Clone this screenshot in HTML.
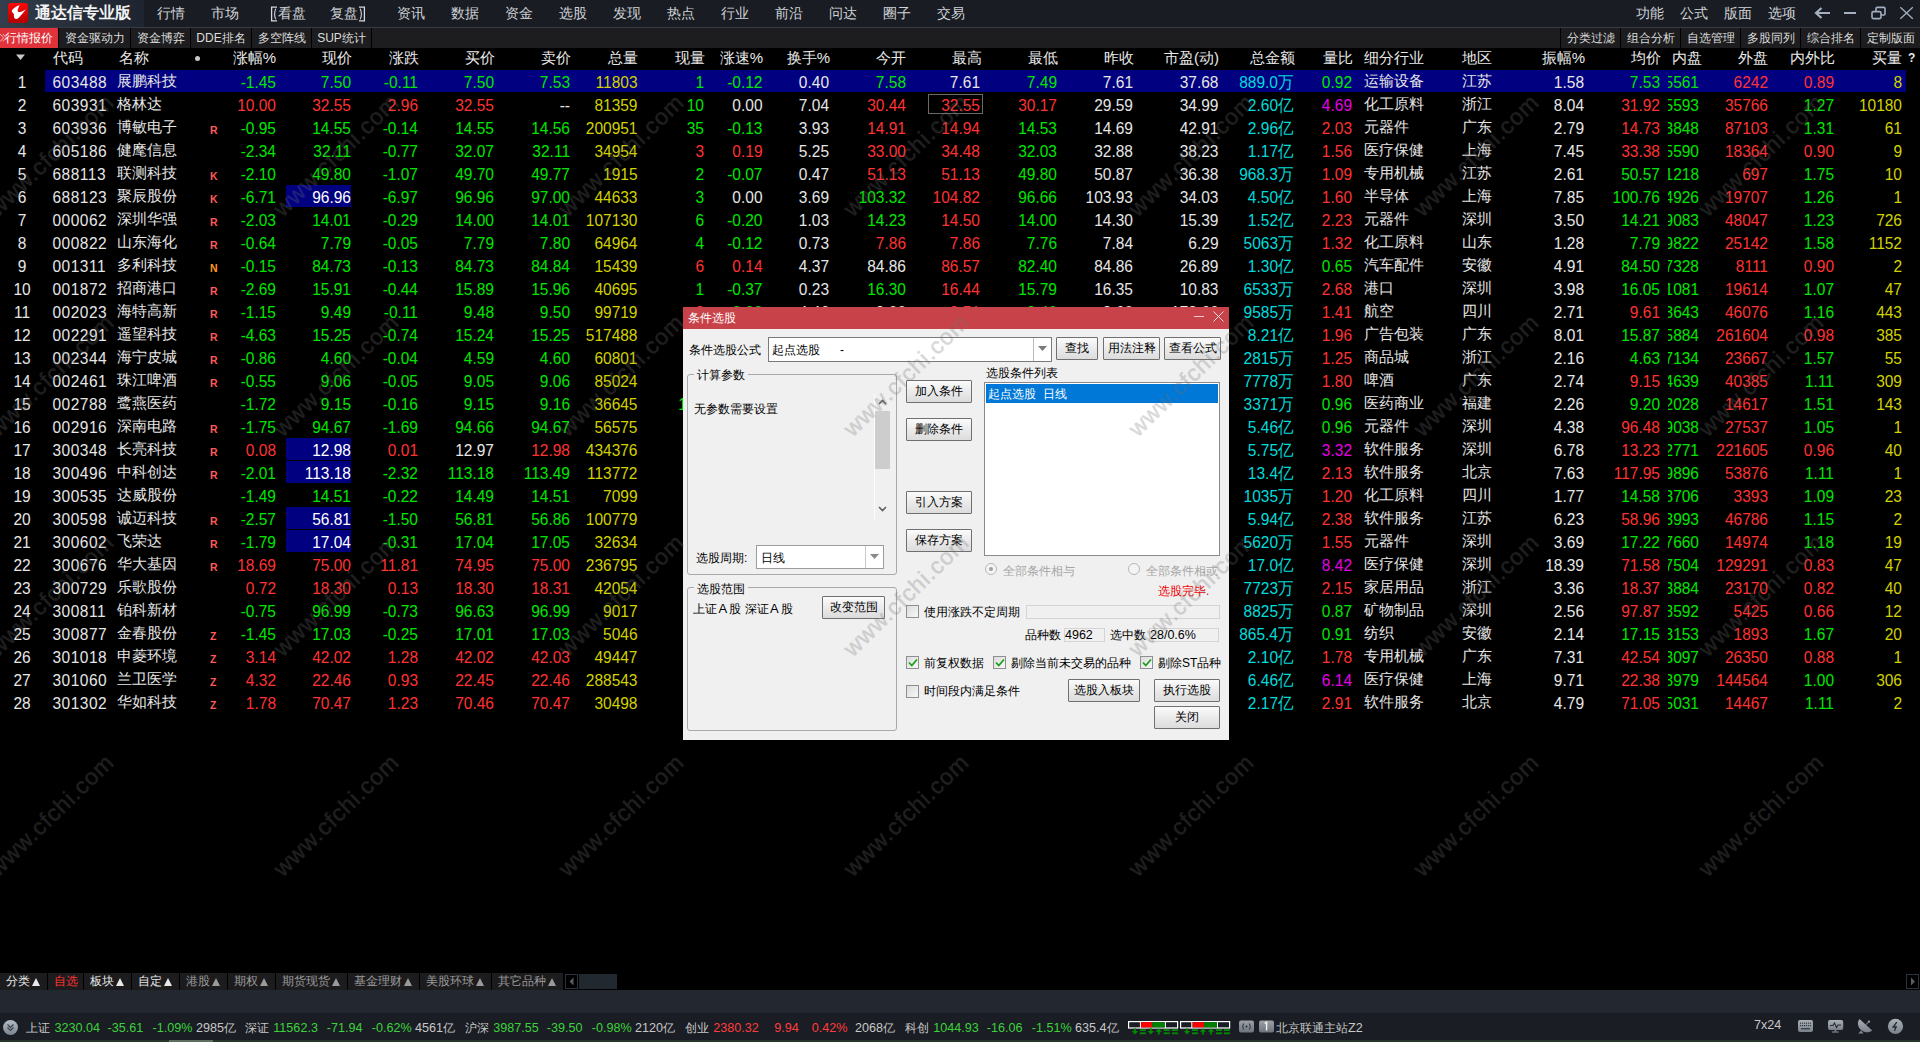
<!DOCTYPE html>
<html><head><meta charset="utf-8">
<style>
*{margin:0;padding:0;box-sizing:border-box}
html,body{width:1920px;height:1042px;overflow:hidden;background:#000;font-family:"Liberation Sans",sans-serif;position:relative}
div{position:absolute;white-space:nowrap}
#title{left:0;top:0;width:1920px;height:27px;background:#191c23}
#logoarea{left:0;top:0;width:144px;height:27px;background:linear-gradient(90deg,#343e4c,#222934 70%,#1f2530)}
#tline{left:0;top:27px;width:1920px;height:1px;background:#363b44}
#logo{left:8px;top:3px;width:20px;height:20px;border-radius:3px;background:linear-gradient(180deg,#ff0808,#b20000)}
#apptitle{left:35px;top:3px;font-size:16px;font-weight:bold;color:#f2f2f2;line-height:20px}
.mn{top:4px;font-size:14px;line-height:18px;color:#cfd2d6}
#tabbar{left:0;top:28px;width:1920px;height:20px;background:#1d1d1f}
.tb{top:28px;height:20px;font-size:12px;line-height:20px;color:#dcdcdc;text-align:center;background:#1d1d1f}
.tsep{top:28px;width:1px;height:20px;background:#000}
#redtab{left:0;top:28px;width:58px;height:20px;background:#e0323a;color:#fff;font-size:12px;line-height:20px}
.h{top:48px;height:22px;line-height:20px;font-size:15px;color:#e8e8e8}
.hlrow{left:45px;width:1861px;height:22px;background:#000080}
.hlcell{left:286px;width:65px;height:22px;background:#000080}
.c{height:22px;line-height:22px;font-size:15.5px}
.n,.code,.idx,.np span{transform:translateY(2px) scaleY(1.1);transform-origin:50% 56%}
.idx{left:0;width:44px;text-align:center;color:#e6e6e6;font-size:15.5px}
.code{left:52.5px;color:#e6e6e6;letter-spacing:0.5px}
.nm{left:117px;color:#e6e6e6;font-size:15px}
.let{left:210px;font-size:10.5px;font-weight:bold;top:0;padding-top:3px}
.ind{left:1364px;color:#e6e6e6;font-size:15px}
.reg{left:1462px;color:#e6e6e6;font-size:15px}
.np{left:1668px;width:31px;overflow:hidden;color:#00e600}
.np span{position:absolute;right:0;top:0}
.wm{width:200px;height:24px;line-height:24px;text-align:center;font-size:23px;letter-spacing:0.9px;color:#727272;-webkit-text-stroke:0.45px #727272;opacity:0.27;transform:rotate(-44deg);z-index:50;pointer-events:none}
#btabbar{left:0;top:973px;width:617px;height:17px;background:#000}
.bt{top:973px;height:17px;line-height:17px;font-size:12px;background:#1c1c1e;padding-left:5.5px}
.tri{display:inline-block;width:0;height:0;border-left:4.5px solid transparent;border-right:4.5px solid transparent;border-bottom:8px solid currentColor;margin-left:2px;vertical-align:-1px}
#bar2{left:0;top:990px;width:1920px;height:23px;background:#222730}
#status{left:0;top:1013px;width:1920px;height:29px;background:#1a1d23}
.st{top:1019px;font-size:12.6px;line-height:18px}
/* dialog */
#dlg{left:683px;top:307px;width:546px;height:433px;background:#f0f0f0;z-index:10;font-size:12px;color:#000}
#dlg div{line-height:14px}
#dtitle{left:0;top:0;width:546px;height:22px;background:#c84349}
.btn{height:23px;border:1px solid #707070;border-radius:1px;background:linear-gradient(180deg,#fbfbfb 0%,#ececec 45%,#dcdcdc 100%);text-align:center;line-height:20px!important;font-size:12px}
.btn span{position:static}
.grp{border:1px solid #a9a9a9;border-radius:3px}
.glab{background:#f0f0f0;padding:0 3px}
.edit{background:#fff;border:1px solid #7a7a7a}
.chk{width:13px;height:13px;border:1px solid #8e8f8f;background:linear-gradient(135deg,#dcdcdc,#f8f8f8)}
</style></head><body>
<div id="title"></div>
<div id="logoarea"></div>
<div id="tline"></div>
<div id="logo"><svg width="20" height="20" viewBox="0 0 20 20" style="position:absolute;left:0;top:0"><path d="M11.7 2 C9.5 2.8 7 4 5 6 C4 7 3.6 8 4 8.8 C4.6 9.8 5.6 10.6 6 11.4 C5.9 12.6 5.8 14 6.4 15 C6.8 15.8 7.6 16 8.6 15.9 C9.4 15.8 10.2 15.4 11 14.6 C13.4 12 15.8 9 18 6.3 C16.4 7.4 14.4 8.4 12.2 9 C11 9.2 9.8 9 9.6 8 C9.6 6.6 10.8 4 11.7 2 Z" fill="#fff"/></svg></div>
<div id="apptitle">通达信专业版</div>
<div class="mn" style="left:157px">行情</div>
<div class="mn" style="left:211px">市场</div>
<div class="mn" style="left:278px">看盘</div>
<div class="mn" style="left:330px">复盘</div>
<div class="mn" style="left:397px">资讯</div>
<div class="mn" style="left:451px">数据</div>
<div class="mn" style="left:505px">资金</div>
<div class="mn" style="left:559px">选股</div>
<div class="mn" style="left:613px">发现</div>
<div class="mn" style="left:667px">热点</div>
<div class="mn" style="left:721px">行业</div>
<div class="mn" style="left:775px">前沿</div>
<div class="mn" style="left:829px">问达</div>
<div class="mn" style="left:883px">圈子</div>
<div class="mn" style="left:937px">交易</div>
<svg style="position:absolute;left:270px;top:6px" width="8" height="16" viewBox="0 0 8 16"><path d="M7 1.2 H1.6 V14.8 H7" stroke="#d6d8dc" stroke-width="1.3" fill="none"/><path d="M5.8 2.6 Q3.4 8 5.8 13.4" stroke="#d6d8dc" stroke-width="1.1" fill="none"/></svg>
<svg style="position:absolute;left:358px;top:6px" width="8" height="16" viewBox="0 0 8 16"><path d="M1 1.2 H6.4 V14.8 H1" stroke="#d6d8dc" stroke-width="1.3" fill="none"/><path d="M2.2 2.6 Q4.6 8 2.2 13.4" stroke="#d6d8dc" stroke-width="1.1" fill="none"/></svg>
<div class="mn" style="left:1636px">功能</div>
<div class="mn" style="left:1680px">公式</div>
<div class="mn" style="left:1724px">版面</div>
<div class="mn" style="left:1767.5px">选项</div>
<svg style="position:absolute;left:1812px;top:6px" width="110" height="16" viewBox="0 0 110 16">
<path d="M4 7 H18" stroke="#a4b0c2" stroke-width="2" fill="none"/>
<path d="M9.5 2 L4 7 L9.5 12" stroke="#a4b0c2" stroke-width="2.2" fill="none"/>
<path d="M32 7 H44" stroke="#a4b0c2" stroke-width="2" fill="none"/>
<path d="M64 5 V2.6 Q64 1.4 65.2 1.4 H71.8 Q73 1.4 73 2.6 V7.8 Q73 9 71.8 9 H69" stroke="#a4b0c2" stroke-width="1.6" fill="none"/>
<rect x="60" y="5.6" width="9" height="7" rx="1.3" stroke="#a4b0c2" stroke-width="1.6" fill="none"/>
<path d="M88.3 1.2 L100.8 12.8 M100.8 1.2 L88.3 12.8" stroke="#a4b0c2" stroke-width="1.3" fill="none"/>
</svg>
<div id="tabbar"></div>
<div id="redtab"><svg style="position:absolute;left:0;top:5px" width="8" height="10"><path d="M0 1 L3.6 4.8 L0 8.6 M2.8 1 L6.4 4.8 L2.8 8.6" stroke="#f4b8b8" stroke-width="1" fill="none"/></svg><span style="position:absolute;left:5px;top:0">行情报价</span></div>
<div class="tb" style="left:59px;width:71px">资金驱动力</div>
<div class="tb" style="left:131px;width:59px">资金博弈</div>
<div class="tb" style="left:191px;width:60px">DDE排名</div>
<div class="tb" style="left:252px;width:59px">多空阵线</div>
<div class="tb" style="left:312px;width:59px">SUP统计</div>
<div class="tb" style="left:1561px;width:59px">分类过滤</div>
<div class="tb" style="left:1621px;width:59px">组合分析</div>
<div class="tb" style="left:1681px;width:59px">自选管理</div>
<div class="tb" style="left:1741px;width:59px">多股同列</div>
<div class="tb" style="left:1801px;width:59px">综合排名</div>
<div class="tb" style="left:1861px;width:59px">定制版面</div>
<div class="tsep" style="left:58px"></div><div class="tsep" style="left:130px"></div><div class="tsep" style="left:190px"></div><div class="tsep" style="left:251px"></div><div class="tsep" style="left:311px"></div><div class="tsep" style="left:371px"></div>
<div class="tsep" style="left:1560px"></div><div class="tsep" style="left:1620px"></div><div class="tsep" style="left:1680px"></div><div class="tsep" style="left:1740px"></div><div class="tsep" style="left:1800px"></div><div class="tsep" style="left:1860px"></div>
<svg style="position:absolute;left:15px;top:54px" width="11" height="7"><path d="M1 0.5 H10 L5.5 6 Z" fill="#c8c8c8"/></svg>
<div style="left:195px;top:56px;width:5px;height:5px;border-radius:50%;background:#c8c8c8"></div>
<div class="h" style="left:52.5px">代码</div>
<div class="h" style="left:119px">名称</div>
<div class="h" style="right:1644px">涨幅%</div>
<div class="h" style="right:1568px">现价</div>
<div class="h" style="right:1501px">涨跌</div>
<div class="h" style="right:1425px">买价</div>
<div class="h" style="right:1349px">卖价</div>
<div class="h" style="right:1282px">总量</div>
<div class="h" style="right:1215px">现量</div>
<div class="h" style="right:1157px">涨速%</div>
<div class="h" style="right:1090px">换手%</div>
<div class="h" style="right:1014px">今开</div>
<div class="h" style="right:938px">最高</div>
<div class="h" style="right:862px">最低</div>
<div class="h" style="right:786px">昨收</div>
<div class="h" style="right:701px">市盈(动)</div>
<div class="h" style="right:625px">总金额</div>
<div class="h" style="right:567px">量比</div>
<div class="h" style="left:1364px">细分行业</div>
<div class="h" style="left:1462px">地区</div>
<div class="h" style="right:335px">振幅%</div>
<div class="h" style="right:259px">均价</div>
<div class="h" style="left:1671.5px">内盘</div>
<div class="h" style="right:152px">外盘</div>
<div class="h" style="right:85px">内外比</div>
<div class="h" style="right:18px">买量</div>
<div class="h" style="left:1908px;font-size:12px;font-weight:bold">?</div>
<div class="hlrow" style="top:70px"></div>
<div class="c idx" style="top:70px">1</div>
<div class="c code" style="top:70px">603488</div>
<div class="c nm" style="top:70px">展鹏科技</div>
<div class="c n" style="top:70px;right:1644px;color:#00e600">-1.45</div>
<div class="c n" style="top:70px;right:1569px;color:#00e600">7.50</div>
<div class="c n" style="top:70px;right:1502px;color:#00e600">-0.11</div>
<div class="c n" style="top:70px;right:1426px;color:#00e600">7.50</div>
<div class="c n" style="top:70px;right:1350px;color:#00e600">7.53</div>
<div class="c n" style="top:70px;right:1282.5px;color:#d2d200">11803</div>
<div class="c n" style="top:70px;right:1216px;color:#00e600">1</div>
<div class="c n" style="top:70px;right:1157.5px;color:#00e600">-0.12</div>
<div class="c n" style="top:70px;right:1091px;color:#e6e6e6">0.40</div>
<div class="c n" style="top:70px;right:1014px;color:#00e600">7.58</div>
<div class="c n" style="top:70px;right:940px;color:#e6e6e6">7.61</div>
<div class="c n" style="top:70px;right:863px;color:#00e600">7.49</div>
<div class="c n" style="top:70px;right:787px;color:#e6e6e6">7.61</div>
<div class="c n" style="top:70px;right:701.5px;color:#e6e6e6">37.68</div>
<div class="c n" style="top:70px;right:626px;color:#00dcdc">889.0万</div>
<div class="c n" style="top:70px;right:568px;color:#00e600">0.92</div>
<div class="c ind" style="top:70px">运输设备</div>
<div class="c reg" style="top:70px">江苏</div>
<div class="c n" style="top:70px;right:336px;color:#e6e6e6">1.58</div>
<div class="c n" style="top:70px;right:260px;color:#00e600">7.53</div>
<div class="c np" style="top:70px;color:#00e600"><span>55561</span></div>
<div class="c n" style="top:70px;right:152px;color:#ff3232">6242</div>
<div class="c n" style="top:70px;right:86px;color:#ff3232">0.89</div>
<div class="c n" style="top:70px;right:18px;color:#d2d200">8</div>
<div class="c idx" style="top:93px">2</div>
<div class="c code" style="top:93px">603931</div>
<div class="c nm" style="top:93px">格林达</div>
<div class="c n" style="top:93px;right:1644px;color:#ff3232">10.00</div>
<div class="c n" style="top:93px;right:1569px;color:#ff3232">32.55</div>
<div class="c n" style="top:93px;right:1502px;color:#ff3232">2.96</div>
<div class="c n" style="top:93px;right:1426px;color:#ff3232">32.55</div>
<div class="c n" style="top:93px;right:1350px;color:#e6e6e6">--</div>
<div class="c n" style="top:93px;right:1282.5px;color:#d2d200">81359</div>
<div class="c n" style="top:93px;right:1216px;color:#00e600">10</div>
<div class="c n" style="top:93px;right:1157.5px;color:#e6e6e6">0.00</div>
<div class="c n" style="top:93px;right:1091px;color:#e6e6e6">7.04</div>
<div class="c n" style="top:93px;right:1014px;color:#ff3232">30.44</div>
<div class="c n" style="top:93px;right:940px;color:#ff3232">32.55</div>
<div class="c n" style="top:93px;right:863px;color:#ff3232">30.17</div>
<div class="c n" style="top:93px;right:787px;color:#e6e6e6">29.59</div>
<div class="c n" style="top:93px;right:701.5px;color:#e6e6e6">34.99</div>
<div class="c n" style="top:93px;right:626px;color:#00dcdc">2.60亿</div>
<div class="c n" style="top:93px;right:568px;color:#e600e6">4.69</div>
<div class="c ind" style="top:93px">化工原料</div>
<div class="c reg" style="top:93px">浙江</div>
<div class="c n" style="top:93px;right:336px;color:#e6e6e6">8.04</div>
<div class="c n" style="top:93px;right:260px;color:#ff3232">31.92</div>
<div class="c np" style="top:93px;color:#00e600"><span>55593</span></div>
<div class="c n" style="top:93px;right:152px;color:#ff3232">35766</div>
<div class="c n" style="top:93px;right:86px;color:#00e600">1.27</div>
<div class="c n" style="top:93px;right:18px;color:#d2d200">10180</div>
<div class="c idx" style="top:116px">3</div>
<div class="c code" style="top:116px">603936</div>
<div class="c nm" style="top:116px">博敏电子</div>
<div class="c let" style="top:116px;color:#ff5a5a">R</div>
<div class="c n" style="top:116px;right:1644px;color:#00e600">-0.95</div>
<div class="c n" style="top:116px;right:1569px;color:#00e600">14.55</div>
<div class="c n" style="top:116px;right:1502px;color:#00e600">-0.14</div>
<div class="c n" style="top:116px;right:1426px;color:#00e600">14.55</div>
<div class="c n" style="top:116px;right:1350px;color:#00e600">14.56</div>
<div class="c n" style="top:116px;right:1282.5px;color:#d2d200">200951</div>
<div class="c n" style="top:116px;right:1216px;color:#00e600">35</div>
<div class="c n" style="top:116px;right:1157.5px;color:#00e600">-0.13</div>
<div class="c n" style="top:116px;right:1091px;color:#e6e6e6">3.93</div>
<div class="c n" style="top:116px;right:1014px;color:#ff3232">14.91</div>
<div class="c n" style="top:116px;right:940px;color:#ff3232">14.94</div>
<div class="c n" style="top:116px;right:863px;color:#00e600">14.53</div>
<div class="c n" style="top:116px;right:787px;color:#e6e6e6">14.69</div>
<div class="c n" style="top:116px;right:701.5px;color:#e6e6e6">42.91</div>
<div class="c n" style="top:116px;right:626px;color:#00dcdc">2.96亿</div>
<div class="c n" style="top:116px;right:568px;color:#ff3232">2.03</div>
<div class="c ind" style="top:116px">元器件</div>
<div class="c reg" style="top:116px">广东</div>
<div class="c n" style="top:116px;right:336px;color:#e6e6e6">2.79</div>
<div class="c n" style="top:116px;right:260px;color:#ff3232">14.73</div>
<div class="c np" style="top:116px;color:#00e600"><span>33848</span></div>
<div class="c n" style="top:116px;right:152px;color:#ff3232">87103</div>
<div class="c n" style="top:116px;right:86px;color:#00e600">1.31</div>
<div class="c n" style="top:116px;right:18px;color:#d2d200">61</div>
<div class="c idx" style="top:139px">4</div>
<div class="c code" style="top:139px">605186</div>
<div class="c nm" style="top:139px">健麾信息</div>
<div class="c n" style="top:139px;right:1644px;color:#00e600">-2.34</div>
<div class="c n" style="top:139px;right:1569px;color:#00e600">32.11</div>
<div class="c n" style="top:139px;right:1502px;color:#00e600">-0.77</div>
<div class="c n" style="top:139px;right:1426px;color:#00e600">32.07</div>
<div class="c n" style="top:139px;right:1350px;color:#00e600">32.11</div>
<div class="c n" style="top:139px;right:1282.5px;color:#d2d200">34954</div>
<div class="c n" style="top:139px;right:1216px;color:#ff3232">3</div>
<div class="c n" style="top:139px;right:1157.5px;color:#ff3232">0.19</div>
<div class="c n" style="top:139px;right:1091px;color:#e6e6e6">5.25</div>
<div class="c n" style="top:139px;right:1014px;color:#ff3232">33.00</div>
<div class="c n" style="top:139px;right:940px;color:#ff3232">34.48</div>
<div class="c n" style="top:139px;right:863px;color:#00e600">32.03</div>
<div class="c n" style="top:139px;right:787px;color:#e6e6e6">32.88</div>
<div class="c n" style="top:139px;right:701.5px;color:#e6e6e6">38.23</div>
<div class="c n" style="top:139px;right:626px;color:#00dcdc">1.17亿</div>
<div class="c n" style="top:139px;right:568px;color:#ff3232">1.56</div>
<div class="c ind" style="top:139px">医疗保健</div>
<div class="c reg" style="top:139px">上海</div>
<div class="c n" style="top:139px;right:336px;color:#e6e6e6">7.45</div>
<div class="c n" style="top:139px;right:260px;color:#ff3232">33.38</div>
<div class="c np" style="top:139px;color:#00e600"><span>55590</span></div>
<div class="c n" style="top:139px;right:152px;color:#ff3232">18364</div>
<div class="c n" style="top:139px;right:86px;color:#ff3232">0.90</div>
<div class="c n" style="top:139px;right:18px;color:#d2d200">9</div>
<div class="c idx" style="top:162px">5</div>
<div class="c code" style="top:162px">688113</div>
<div class="c nm" style="top:162px">联测科技</div>
<div class="c let" style="top:162px;color:#ff5a5a">K</div>
<div class="c n" style="top:162px;right:1644px;color:#00e600">-2.10</div>
<div class="c n" style="top:162px;right:1569px;color:#00e600">49.80</div>
<div class="c n" style="top:162px;right:1502px;color:#00e600">-1.07</div>
<div class="c n" style="top:162px;right:1426px;color:#00e600">49.70</div>
<div class="c n" style="top:162px;right:1350px;color:#00e600">49.77</div>
<div class="c n" style="top:162px;right:1282.5px;color:#d2d200">1915</div>
<div class="c n" style="top:162px;right:1216px;color:#00e600">2</div>
<div class="c n" style="top:162px;right:1157.5px;color:#00e600">-0.07</div>
<div class="c n" style="top:162px;right:1091px;color:#e6e6e6">0.47</div>
<div class="c n" style="top:162px;right:1014px;color:#ff3232">51.13</div>
<div class="c n" style="top:162px;right:940px;color:#ff3232">51.13</div>
<div class="c n" style="top:162px;right:863px;color:#00e600">49.80</div>
<div class="c n" style="top:162px;right:787px;color:#e6e6e6">50.87</div>
<div class="c n" style="top:162px;right:701.5px;color:#e6e6e6">36.38</div>
<div class="c n" style="top:162px;right:626px;color:#00dcdc">968.3万</div>
<div class="c n" style="top:162px;right:568px;color:#ff3232">1.09</div>
<div class="c ind" style="top:162px">专用机械</div>
<div class="c reg" style="top:162px">江苏</div>
<div class="c n" style="top:162px;right:336px;color:#e6e6e6">2.61</div>
<div class="c n" style="top:162px;right:260px;color:#00e600">50.57</div>
<div class="c np" style="top:162px;color:#00e600"><span>11218</span></div>
<div class="c n" style="top:162px;right:152px;color:#ff3232">697</div>
<div class="c n" style="top:162px;right:86px;color:#00e600">1.75</div>
<div class="c n" style="top:162px;right:18px;color:#d2d200">10</div>
<div class="c idx" style="top:185px">6</div>
<div class="c code" style="top:185px">688123</div>
<div class="c nm" style="top:185px">聚辰股份</div>
<div class="c let" style="top:185px;color:#ff5a5a">K</div>
<div class="c n" style="top:185px;right:1644px;color:#00e600">-6.71</div>
<div class="hlcell" style="top:185px"></div>
<div class="c n" style="top:185px;right:1569px;color:#ffffff">96.96</div>
<div class="c n" style="top:185px;right:1502px;color:#00e600">-6.97</div>
<div class="c n" style="top:185px;right:1426px;color:#00e600">96.96</div>
<div class="c n" style="top:185px;right:1350px;color:#00e600">97.00</div>
<div class="c n" style="top:185px;right:1282.5px;color:#d2d200">44633</div>
<div class="c n" style="top:185px;right:1216px;color:#00e600">3</div>
<div class="c n" style="top:185px;right:1157.5px;color:#e6e6e6">0.00</div>
<div class="c n" style="top:185px;right:1091px;color:#e6e6e6">3.69</div>
<div class="c n" style="top:185px;right:1014px;color:#00e600">103.32</div>
<div class="c n" style="top:185px;right:940px;color:#ff3232">104.82</div>
<div class="c n" style="top:185px;right:863px;color:#00e600">96.66</div>
<div class="c n" style="top:185px;right:787px;color:#e6e6e6">103.93</div>
<div class="c n" style="top:185px;right:701.5px;color:#e6e6e6">34.03</div>
<div class="c n" style="top:185px;right:626px;color:#00dcdc">4.50亿</div>
<div class="c n" style="top:185px;right:568px;color:#ff3232">1.60</div>
<div class="c ind" style="top:185px">半导体</div>
<div class="c reg" style="top:185px">上海</div>
<div class="c n" style="top:185px;right:336px;color:#e6e6e6">7.85</div>
<div class="c n" style="top:185px;right:260px;color:#00e600">100.76</div>
<div class="c np" style="top:185px;color:#00e600"><span>44926</span></div>
<div class="c n" style="top:185px;right:152px;color:#ff3232">19707</div>
<div class="c n" style="top:185px;right:86px;color:#00e600">1.26</div>
<div class="c n" style="top:185px;right:18px;color:#d2d200">1</div>
<div class="c idx" style="top:208px">7</div>
<div class="c code" style="top:208px">000062</div>
<div class="c nm" style="top:208px">深圳华强</div>
<div class="c let" style="top:208px;color:#ff5a5a">R</div>
<div class="c n" style="top:208px;right:1644px;color:#00e600">-2.03</div>
<div class="c n" style="top:208px;right:1569px;color:#00e600">14.01</div>
<div class="c n" style="top:208px;right:1502px;color:#00e600">-0.29</div>
<div class="c n" style="top:208px;right:1426px;color:#00e600">14.00</div>
<div class="c n" style="top:208px;right:1350px;color:#00e600">14.01</div>
<div class="c n" style="top:208px;right:1282.5px;color:#d2d200">107130</div>
<div class="c n" style="top:208px;right:1216px;color:#00e600">6</div>
<div class="c n" style="top:208px;right:1157.5px;color:#00e600">-0.20</div>
<div class="c n" style="top:208px;right:1091px;color:#e6e6e6">1.03</div>
<div class="c n" style="top:208px;right:1014px;color:#00e600">14.23</div>
<div class="c n" style="top:208px;right:940px;color:#ff3232">14.50</div>
<div class="c n" style="top:208px;right:863px;color:#00e600">14.00</div>
<div class="c n" style="top:208px;right:787px;color:#e6e6e6">14.30</div>
<div class="c n" style="top:208px;right:701.5px;color:#e6e6e6">15.39</div>
<div class="c n" style="top:208px;right:626px;color:#00dcdc">1.52亿</div>
<div class="c n" style="top:208px;right:568px;color:#ff3232">2.23</div>
<div class="c ind" style="top:208px">元器件</div>
<div class="c reg" style="top:208px">深圳</div>
<div class="c n" style="top:208px;right:336px;color:#e6e6e6">3.50</div>
<div class="c n" style="top:208px;right:260px;color:#00e600">14.21</div>
<div class="c np" style="top:208px;color:#00e600"><span>99083</span></div>
<div class="c n" style="top:208px;right:152px;color:#ff3232">48047</div>
<div class="c n" style="top:208px;right:86px;color:#00e600">1.23</div>
<div class="c n" style="top:208px;right:18px;color:#d2d200">726</div>
<div class="c idx" style="top:231px">8</div>
<div class="c code" style="top:231px">000822</div>
<div class="c nm" style="top:231px">山东海化</div>
<div class="c let" style="top:231px;color:#ff5a5a">R</div>
<div class="c n" style="top:231px;right:1644px;color:#00e600">-0.64</div>
<div class="c n" style="top:231px;right:1569px;color:#00e600">7.79</div>
<div class="c n" style="top:231px;right:1502px;color:#00e600">-0.05</div>
<div class="c n" style="top:231px;right:1426px;color:#00e600">7.79</div>
<div class="c n" style="top:231px;right:1350px;color:#00e600">7.80</div>
<div class="c n" style="top:231px;right:1282.5px;color:#d2d200">64964</div>
<div class="c n" style="top:231px;right:1216px;color:#00e600">4</div>
<div class="c n" style="top:231px;right:1157.5px;color:#00e600">-0.12</div>
<div class="c n" style="top:231px;right:1091px;color:#e6e6e6">0.73</div>
<div class="c n" style="top:231px;right:1014px;color:#ff3232">7.86</div>
<div class="c n" style="top:231px;right:940px;color:#ff3232">7.86</div>
<div class="c n" style="top:231px;right:863px;color:#00e600">7.76</div>
<div class="c n" style="top:231px;right:787px;color:#e6e6e6">7.84</div>
<div class="c n" style="top:231px;right:701.5px;color:#e6e6e6">6.29</div>
<div class="c n" style="top:231px;right:626px;color:#00dcdc">5063万</div>
<div class="c n" style="top:231px;right:568px;color:#ff3232">1.32</div>
<div class="c ind" style="top:231px">化工原料</div>
<div class="c reg" style="top:231px">山东</div>
<div class="c n" style="top:231px;right:336px;color:#e6e6e6">1.28</div>
<div class="c n" style="top:231px;right:260px;color:#00e600">7.79</div>
<div class="c np" style="top:231px;color:#00e600"><span>99822</span></div>
<div class="c n" style="top:231px;right:152px;color:#ff3232">25142</div>
<div class="c n" style="top:231px;right:86px;color:#00e600">1.58</div>
<div class="c n" style="top:231px;right:18px;color:#d2d200">1152</div>
<div class="c idx" style="top:254px">9</div>
<div class="c code" style="top:254px">001311</div>
<div class="c nm" style="top:254px">多利科技</div>
<div class="c let" style="top:254px;color:#ff9a1e">N</div>
<div class="c n" style="top:254px;right:1644px;color:#00e600">-0.15</div>
<div class="c n" style="top:254px;right:1569px;color:#00e600">84.73</div>
<div class="c n" style="top:254px;right:1502px;color:#00e600">-0.13</div>
<div class="c n" style="top:254px;right:1426px;color:#00e600">84.73</div>
<div class="c n" style="top:254px;right:1350px;color:#00e600">84.84</div>
<div class="c n" style="top:254px;right:1282.5px;color:#d2d200">15439</div>
<div class="c n" style="top:254px;right:1216px;color:#ff3232">6</div>
<div class="c n" style="top:254px;right:1157.5px;color:#ff3232">0.14</div>
<div class="c n" style="top:254px;right:1091px;color:#e6e6e6">4.37</div>
<div class="c n" style="top:254px;right:1014px;color:#e6e6e6">84.86</div>
<div class="c n" style="top:254px;right:940px;color:#ff3232">86.57</div>
<div class="c n" style="top:254px;right:863px;color:#00e600">82.40</div>
<div class="c n" style="top:254px;right:787px;color:#e6e6e6">84.86</div>
<div class="c n" style="top:254px;right:701.5px;color:#e6e6e6">26.89</div>
<div class="c n" style="top:254px;right:626px;color:#00dcdc">1.30亿</div>
<div class="c n" style="top:254px;right:568px;color:#00e600">0.65</div>
<div class="c ind" style="top:254px">汽车配件</div>
<div class="c reg" style="top:254px">安徽</div>
<div class="c n" style="top:254px;right:336px;color:#e6e6e6">4.91</div>
<div class="c n" style="top:254px;right:260px;color:#00e600">84.50</div>
<div class="c np" style="top:254px;color:#00e600"><span>77328</span></div>
<div class="c n" style="top:254px;right:152px;color:#ff3232">8111</div>
<div class="c n" style="top:254px;right:86px;color:#ff3232">0.90</div>
<div class="c n" style="top:254px;right:18px;color:#d2d200">2</div>
<div class="c idx" style="top:277px">10</div>
<div class="c code" style="top:277px">001872</div>
<div class="c nm" style="top:277px">招商港口</div>
<div class="c let" style="top:277px;color:#ff5a5a">R</div>
<div class="c n" style="top:277px;right:1644px;color:#00e600">-2.69</div>
<div class="c n" style="top:277px;right:1569px;color:#00e600">15.91</div>
<div class="c n" style="top:277px;right:1502px;color:#00e600">-0.44</div>
<div class="c n" style="top:277px;right:1426px;color:#00e600">15.89</div>
<div class="c n" style="top:277px;right:1350px;color:#00e600">15.96</div>
<div class="c n" style="top:277px;right:1282.5px;color:#d2d200">40695</div>
<div class="c n" style="top:277px;right:1216px;color:#00e600">1</div>
<div class="c n" style="top:277px;right:1157.5px;color:#00e600">-0.37</div>
<div class="c n" style="top:277px;right:1091px;color:#e6e6e6">0.23</div>
<div class="c n" style="top:277px;right:1014px;color:#00e600">16.30</div>
<div class="c n" style="top:277px;right:940px;color:#ff3232">16.44</div>
<div class="c n" style="top:277px;right:863px;color:#00e600">15.79</div>
<div class="c n" style="top:277px;right:787px;color:#e6e6e6">16.35</div>
<div class="c n" style="top:277px;right:701.5px;color:#e6e6e6">10.83</div>
<div class="c n" style="top:277px;right:626px;color:#00dcdc">6533万</div>
<div class="c n" style="top:277px;right:568px;color:#ff3232">2.68</div>
<div class="c ind" style="top:277px">港口</div>
<div class="c reg" style="top:277px">深圳</div>
<div class="c n" style="top:277px;right:336px;color:#e6e6e6">3.98</div>
<div class="c n" style="top:277px;right:260px;color:#00e600">16.05</div>
<div class="c np" style="top:277px;color:#00e600"><span>11081</span></div>
<div class="c n" style="top:277px;right:152px;color:#ff3232">19614</div>
<div class="c n" style="top:277px;right:86px;color:#00e600">1.07</div>
<div class="c n" style="top:277px;right:18px;color:#d2d200">47</div>
<div class="c idx" style="top:300px">11</div>
<div class="c code" style="top:300px">002023</div>
<div class="c nm" style="top:300px">海特高新</div>
<div class="c let" style="top:300px;color:#ff5a5a">R</div>
<div class="c n" style="top:300px;right:1644px;color:#00e600">-1.15</div>
<div class="c n" style="top:300px;right:1569px;color:#00e600">9.49</div>
<div class="c n" style="top:300px;right:1502px;color:#00e600">-0.11</div>
<div class="c n" style="top:300px;right:1426px;color:#00e600">9.48</div>
<div class="c n" style="top:300px;right:1350px;color:#00e600">9.50</div>
<div class="c n" style="top:300px;right:1282.5px;color:#d2d200">99719</div>
<div class="c n" style="top:300px;right:1216px;color:#ff3232">3</div>
<div class="c n" style="top:300px;right:1157.5px;color:#00e600">0.00</div>
<div class="c n" style="top:300px;right:1091px;color:#e6e6e6">4.46</div>
<div class="c n" style="top:300px;right:1014px;color:#e6e6e6">9.00</div>
<div class="c n" style="top:300px;right:940px;color:#ff3232">9.51</div>
<div class="c n" style="top:300px;right:863px;color:#00e600">9.40</div>
<div class="c n" style="top:300px;right:787px;color:#e6e6e6">9.60</div>
<div class="c n" style="top:300px;right:701.5px;color:#e6e6e6">173.66</div>
<div class="c n" style="top:300px;right:626px;color:#00dcdc">9585万</div>
<div class="c n" style="top:300px;right:568px;color:#ff3232">1.41</div>
<div class="c ind" style="top:300px">航空</div>
<div class="c reg" style="top:300px">四川</div>
<div class="c n" style="top:300px;right:336px;color:#e6e6e6">2.71</div>
<div class="c n" style="top:300px;right:260px;color:#ff3232">9.61</div>
<div class="c np" style="top:300px;color:#00e600"><span>33643</span></div>
<div class="c n" style="top:300px;right:152px;color:#ff3232">46076</div>
<div class="c n" style="top:300px;right:86px;color:#00e600">1.16</div>
<div class="c n" style="top:300px;right:18px;color:#d2d200">443</div>
<div class="c idx" style="top:323px">12</div>
<div class="c code" style="top:323px">002291</div>
<div class="c nm" style="top:323px">遥望科技</div>
<div class="c let" style="top:323px;color:#ff5a5a">R</div>
<div class="c n" style="top:323px;right:1644px;color:#00e600">-4.63</div>
<div class="c n" style="top:323px;right:1569px;color:#00e600">15.25</div>
<div class="c n" style="top:323px;right:1502px;color:#00e600">-0.74</div>
<div class="c n" style="top:323px;right:1426px;color:#00e600">15.24</div>
<div class="c n" style="top:323px;right:1350px;color:#00e600">15.25</div>
<div class="c n" style="top:323px;right:1282.5px;color:#d2d200">517488</div>
<div class="c n" style="top:323px;right:1216px;color:#00e600">2</div>
<div class="c n" style="top:323px;right:1157.5px;color:#e6e6e6">0.00</div>
<div class="c n" style="top:323px;right:1091px;color:#e6e6e6">1.00</div>
<div class="c n" style="top:323px;right:1014px;color:#e6e6e6">15.00</div>
<div class="c n" style="top:323px;right:940px;color:#ff3232">15.00</div>
<div class="c n" style="top:323px;right:863px;color:#00e600">15.00</div>
<div class="c n" style="top:323px;right:787px;color:#e6e6e6">15.00</div>
<div class="c n" style="top:323px;right:701.5px;color:#e6e6e6">10.00</div>
<div class="c n" style="top:323px;right:626px;color:#00dcdc">8.21亿</div>
<div class="c n" style="top:323px;right:568px;color:#ff3232">1.96</div>
<div class="c ind" style="top:323px">广告包装</div>
<div class="c reg" style="top:323px">广东</div>
<div class="c n" style="top:323px;right:336px;color:#e6e6e6">8.01</div>
<div class="c n" style="top:323px;right:260px;color:#00e600">15.87</div>
<div class="c np" style="top:323px;color:#00e600"><span>55884</span></div>
<div class="c n" style="top:323px;right:152px;color:#ff3232">261604</div>
<div class="c n" style="top:323px;right:86px;color:#ff3232">0.98</div>
<div class="c n" style="top:323px;right:18px;color:#d2d200">385</div>
<div class="c idx" style="top:346px">13</div>
<div class="c code" style="top:346px">002344</div>
<div class="c nm" style="top:346px">海宁皮城</div>
<div class="c let" style="top:346px;color:#ff5a5a">R</div>
<div class="c n" style="top:346px;right:1644px;color:#00e600">-0.86</div>
<div class="c n" style="top:346px;right:1569px;color:#00e600">4.60</div>
<div class="c n" style="top:346px;right:1502px;color:#00e600">-0.04</div>
<div class="c n" style="top:346px;right:1426px;color:#00e600">4.59</div>
<div class="c n" style="top:346px;right:1350px;color:#00e600">4.60</div>
<div class="c n" style="top:346px;right:1282.5px;color:#d2d200">60801</div>
<div class="c n" style="top:346px;right:1216px;color:#00e600">2</div>
<div class="c n" style="top:346px;right:1157.5px;color:#e6e6e6">0.00</div>
<div class="c n" style="top:346px;right:1091px;color:#e6e6e6">1.00</div>
<div class="c n" style="top:346px;right:1014px;color:#e6e6e6">4.60</div>
<div class="c n" style="top:346px;right:940px;color:#ff3232">4.60</div>
<div class="c n" style="top:346px;right:863px;color:#00e600">4.60</div>
<div class="c n" style="top:346px;right:787px;color:#e6e6e6">4.60</div>
<div class="c n" style="top:346px;right:701.5px;color:#e6e6e6">10.00</div>
<div class="c n" style="top:346px;right:626px;color:#00dcdc">2815万</div>
<div class="c n" style="top:346px;right:568px;color:#ff3232">1.25</div>
<div class="c ind" style="top:346px">商品城</div>
<div class="c reg" style="top:346px">浙江</div>
<div class="c n" style="top:346px;right:336px;color:#e6e6e6">2.16</div>
<div class="c n" style="top:346px;right:260px;color:#00e600">4.63</div>
<div class="c np" style="top:346px;color:#00e600"><span>77134</span></div>
<div class="c n" style="top:346px;right:152px;color:#ff3232">23667</div>
<div class="c n" style="top:346px;right:86px;color:#00e600">1.57</div>
<div class="c n" style="top:346px;right:18px;color:#d2d200">55</div>
<div class="c idx" style="top:369px">14</div>
<div class="c code" style="top:369px">002461</div>
<div class="c nm" style="top:369px">珠江啤酒</div>
<div class="c let" style="top:369px;color:#ff5a5a">R</div>
<div class="c n" style="top:369px;right:1644px;color:#00e600">-0.55</div>
<div class="c n" style="top:369px;right:1569px;color:#00e600">9.06</div>
<div class="c n" style="top:369px;right:1502px;color:#00e600">-0.05</div>
<div class="c n" style="top:369px;right:1426px;color:#00e600">9.05</div>
<div class="c n" style="top:369px;right:1350px;color:#00e600">9.06</div>
<div class="c n" style="top:369px;right:1282.5px;color:#d2d200">85024</div>
<div class="c n" style="top:369px;right:1216px;color:#00e600">2</div>
<div class="c n" style="top:369px;right:1157.5px;color:#e6e6e6">0.00</div>
<div class="c n" style="top:369px;right:1091px;color:#e6e6e6">1.00</div>
<div class="c n" style="top:369px;right:1014px;color:#e6e6e6">9.00</div>
<div class="c n" style="top:369px;right:940px;color:#ff3232">9.00</div>
<div class="c n" style="top:369px;right:863px;color:#00e600">9.00</div>
<div class="c n" style="top:369px;right:787px;color:#e6e6e6">9.00</div>
<div class="c n" style="top:369px;right:701.5px;color:#e6e6e6">10.00</div>
<div class="c n" style="top:369px;right:626px;color:#00dcdc">7778万</div>
<div class="c n" style="top:369px;right:568px;color:#ff3232">1.80</div>
<div class="c ind" style="top:369px">啤酒</div>
<div class="c reg" style="top:369px">广东</div>
<div class="c n" style="top:369px;right:336px;color:#e6e6e6">2.74</div>
<div class="c n" style="top:369px;right:260px;color:#ff3232">9.15</div>
<div class="c np" style="top:369px;color:#00e600"><span>44639</span></div>
<div class="c n" style="top:369px;right:152px;color:#ff3232">40385</div>
<div class="c n" style="top:369px;right:86px;color:#00e600">1.11</div>
<div class="c n" style="top:369px;right:18px;color:#d2d200">309</div>
<div class="c idx" style="top:392px">15</div>
<div class="c code" style="top:392px">002788</div>
<div class="c nm" style="top:392px">鹭燕医药</div>
<div class="c n" style="top:392px;right:1644px;color:#00e600">-1.72</div>
<div class="c n" style="top:392px;right:1569px;color:#00e600">9.15</div>
<div class="c n" style="top:392px;right:1502px;color:#00e600">-0.16</div>
<div class="c n" style="top:392px;right:1426px;color:#00e600">9.15</div>
<div class="c n" style="top:392px;right:1350px;color:#00e600">9.16</div>
<div class="c n" style="top:392px;right:1282.5px;color:#d2d200">36645</div>
<div class="c n" style="top:392px;right:1216px;color:#00e600">148</div>
<div class="c n" style="top:392px;right:1157.5px;color:#e6e6e6">0.00</div>
<div class="c n" style="top:392px;right:1091px;color:#e6e6e6">1.00</div>
<div class="c n" style="top:392px;right:1014px;color:#e6e6e6">9.00</div>
<div class="c n" style="top:392px;right:940px;color:#ff3232">9.00</div>
<div class="c n" style="top:392px;right:863px;color:#00e600">9.00</div>
<div class="c n" style="top:392px;right:787px;color:#e6e6e6">9.00</div>
<div class="c n" style="top:392px;right:701.5px;color:#e6e6e6">10.00</div>
<div class="c n" style="top:392px;right:626px;color:#00dcdc">3371万</div>
<div class="c n" style="top:392px;right:568px;color:#00e600">0.96</div>
<div class="c ind" style="top:392px">医药商业</div>
<div class="c reg" style="top:392px">福建</div>
<div class="c n" style="top:392px;right:336px;color:#e6e6e6">2.26</div>
<div class="c n" style="top:392px;right:260px;color:#00e600">9.20</div>
<div class="c np" style="top:392px;color:#00e600"><span>22028</span></div>
<div class="c n" style="top:392px;right:152px;color:#ff3232">14617</div>
<div class="c n" style="top:392px;right:86px;color:#00e600">1.51</div>
<div class="c n" style="top:392px;right:18px;color:#d2d200">143</div>
<div class="c idx" style="top:415px">16</div>
<div class="c code" style="top:415px">002916</div>
<div class="c nm" style="top:415px">深南电路</div>
<div class="c let" style="top:415px;color:#ff5a5a">R</div>
<div class="c n" style="top:415px;right:1644px;color:#00e600">-1.75</div>
<div class="c n" style="top:415px;right:1569px;color:#00e600">94.67</div>
<div class="c n" style="top:415px;right:1502px;color:#00e600">-1.69</div>
<div class="c n" style="top:415px;right:1426px;color:#00e600">94.66</div>
<div class="c n" style="top:415px;right:1350px;color:#00e600">94.67</div>
<div class="c n" style="top:415px;right:1282.5px;color:#d2d200">56575</div>
<div class="c n" style="top:415px;right:1216px;color:#00e600">2</div>
<div class="c n" style="top:415px;right:1157.5px;color:#e6e6e6">0.00</div>
<div class="c n" style="top:415px;right:1091px;color:#e6e6e6">1.00</div>
<div class="c n" style="top:415px;right:1014px;color:#e6e6e6">9.00</div>
<div class="c n" style="top:415px;right:940px;color:#ff3232">9.00</div>
<div class="c n" style="top:415px;right:863px;color:#00e600">9.00</div>
<div class="c n" style="top:415px;right:787px;color:#e6e6e6">9.00</div>
<div class="c n" style="top:415px;right:701.5px;color:#e6e6e6">10.00</div>
<div class="c n" style="top:415px;right:626px;color:#00dcdc">5.46亿</div>
<div class="c n" style="top:415px;right:568px;color:#00e600">0.96</div>
<div class="c ind" style="top:415px">元器件</div>
<div class="c reg" style="top:415px">深圳</div>
<div class="c n" style="top:415px;right:336px;color:#e6e6e6">4.38</div>
<div class="c n" style="top:415px;right:260px;color:#ff3232">96.48</div>
<div class="c np" style="top:415px;color:#00e600"><span>99038</span></div>
<div class="c n" style="top:415px;right:152px;color:#ff3232">27537</div>
<div class="c n" style="top:415px;right:86px;color:#00e600">1.05</div>
<div class="c n" style="top:415px;right:18px;color:#d2d200">1</div>
<div class="c idx" style="top:438px">17</div>
<div class="c code" style="top:438px">300348</div>
<div class="c nm" style="top:438px">长亮科技</div>
<div class="c let" style="top:438px;color:#ff5a5a">R</div>
<div class="c n" style="top:438px;right:1644px;color:#ff3232">0.08</div>
<div class="hlcell" style="top:438px"></div>
<div class="c n" style="top:438px;right:1569px;color:#ffffff">12.98</div>
<div class="c n" style="top:438px;right:1502px;color:#ff3232">0.01</div>
<div class="c n" style="top:438px;right:1426px;color:#e6e6e6">12.97</div>
<div class="c n" style="top:438px;right:1350px;color:#ff3232">12.98</div>
<div class="c n" style="top:438px;right:1282.5px;color:#d2d200">434376</div>
<div class="c n" style="top:438px;right:1216px;color:#00e600">2</div>
<div class="c n" style="top:438px;right:1157.5px;color:#e6e6e6">0.00</div>
<div class="c n" style="top:438px;right:1091px;color:#e6e6e6">1.00</div>
<div class="c n" style="top:438px;right:1014px;color:#e6e6e6">9.00</div>
<div class="c n" style="top:438px;right:940px;color:#ff3232">9.00</div>
<div class="c n" style="top:438px;right:863px;color:#00e600">9.00</div>
<div class="c n" style="top:438px;right:787px;color:#e6e6e6">9.00</div>
<div class="c n" style="top:438px;right:701.5px;color:#e6e6e6">10.00</div>
<div class="c n" style="top:438px;right:626px;color:#00dcdc">5.75亿</div>
<div class="c n" style="top:438px;right:568px;color:#e600e6">3.32</div>
<div class="c ind" style="top:438px">软件服务</div>
<div class="c reg" style="top:438px">深圳</div>
<div class="c n" style="top:438px;right:336px;color:#e6e6e6">6.78</div>
<div class="c n" style="top:438px;right:260px;color:#ff3232">13.23</div>
<div class="c np" style="top:438px;color:#00e600"><span>22771</span></div>
<div class="c n" style="top:438px;right:152px;color:#ff3232">221605</div>
<div class="c n" style="top:438px;right:86px;color:#ff3232">0.96</div>
<div class="c n" style="top:438px;right:18px;color:#d2d200">40</div>
<div class="c idx" style="top:461px">18</div>
<div class="c code" style="top:461px">300496</div>
<div class="c nm" style="top:461px">中科创达</div>
<div class="c let" style="top:461px;color:#ff5a5a">R</div>
<div class="c n" style="top:461px;right:1644px;color:#00e600">-2.01</div>
<div class="hlcell" style="top:461px"></div>
<div class="c n" style="top:461px;right:1569px;color:#ffffff">113.18</div>
<div class="c n" style="top:461px;right:1502px;color:#00e600">-2.32</div>
<div class="c n" style="top:461px;right:1426px;color:#00e600">113.18</div>
<div class="c n" style="top:461px;right:1350px;color:#00e600">113.49</div>
<div class="c n" style="top:461px;right:1282.5px;color:#d2d200">113772</div>
<div class="c n" style="top:461px;right:1216px;color:#00e600">2</div>
<div class="c n" style="top:461px;right:1157.5px;color:#e6e6e6">0.00</div>
<div class="c n" style="top:461px;right:1091px;color:#e6e6e6">1.00</div>
<div class="c n" style="top:461px;right:1014px;color:#e6e6e6">9.00</div>
<div class="c n" style="top:461px;right:940px;color:#ff3232">9.00</div>
<div class="c n" style="top:461px;right:863px;color:#00e600">9.00</div>
<div class="c n" style="top:461px;right:787px;color:#e6e6e6">9.00</div>
<div class="c n" style="top:461px;right:701.5px;color:#e6e6e6">10.00</div>
<div class="c n" style="top:461px;right:626px;color:#00dcdc">13.4亿</div>
<div class="c n" style="top:461px;right:568px;color:#ff3232">2.13</div>
<div class="c ind" style="top:461px">软件服务</div>
<div class="c reg" style="top:461px">北京</div>
<div class="c n" style="top:461px;right:336px;color:#e6e6e6">7.63</div>
<div class="c n" style="top:461px;right:260px;color:#ff3232">117.95</div>
<div class="c np" style="top:461px;color:#00e600"><span>99896</span></div>
<div class="c n" style="top:461px;right:152px;color:#ff3232">53876</div>
<div class="c n" style="top:461px;right:86px;color:#00e600">1.11</div>
<div class="c n" style="top:461px;right:18px;color:#d2d200">1</div>
<div class="c idx" style="top:484px">19</div>
<div class="c code" style="top:484px">300535</div>
<div class="c nm" style="top:484px">达威股份</div>
<div class="c n" style="top:484px;right:1644px;color:#00e600">-1.49</div>
<div class="c n" style="top:484px;right:1569px;color:#00e600">14.51</div>
<div class="c n" style="top:484px;right:1502px;color:#00e600">-0.22</div>
<div class="c n" style="top:484px;right:1426px;color:#00e600">14.49</div>
<div class="c n" style="top:484px;right:1350px;color:#00e600">14.51</div>
<div class="c n" style="top:484px;right:1282.5px;color:#d2d200">7099</div>
<div class="c n" style="top:484px;right:1216px;color:#00e600">2</div>
<div class="c n" style="top:484px;right:1157.5px;color:#e6e6e6">0.00</div>
<div class="c n" style="top:484px;right:1091px;color:#e6e6e6">1.00</div>
<div class="c n" style="top:484px;right:1014px;color:#e6e6e6">9.00</div>
<div class="c n" style="top:484px;right:940px;color:#ff3232">9.00</div>
<div class="c n" style="top:484px;right:863px;color:#00e600">9.00</div>
<div class="c n" style="top:484px;right:787px;color:#e6e6e6">9.00</div>
<div class="c n" style="top:484px;right:701.5px;color:#e6e6e6">10.00</div>
<div class="c n" style="top:484px;right:626px;color:#00dcdc">1035万</div>
<div class="c n" style="top:484px;right:568px;color:#ff3232">1.20</div>
<div class="c ind" style="top:484px">化工原料</div>
<div class="c reg" style="top:484px">四川</div>
<div class="c n" style="top:484px;right:336px;color:#e6e6e6">1.77</div>
<div class="c n" style="top:484px;right:260px;color:#00e600">14.58</div>
<div class="c np" style="top:484px;color:#00e600"><span>33706</span></div>
<div class="c n" style="top:484px;right:152px;color:#ff3232">3393</div>
<div class="c n" style="top:484px;right:86px;color:#00e600">1.09</div>
<div class="c n" style="top:484px;right:18px;color:#d2d200">23</div>
<div class="c idx" style="top:507px">20</div>
<div class="c code" style="top:507px">300598</div>
<div class="c nm" style="top:507px">诚迈科技</div>
<div class="c let" style="top:507px;color:#ff5a5a">R</div>
<div class="c n" style="top:507px;right:1644px;color:#00e600">-2.57</div>
<div class="hlcell" style="top:507px"></div>
<div class="c n" style="top:507px;right:1569px;color:#ffffff">56.81</div>
<div class="c n" style="top:507px;right:1502px;color:#00e600">-1.50</div>
<div class="c n" style="top:507px;right:1426px;color:#00e600">56.81</div>
<div class="c n" style="top:507px;right:1350px;color:#00e600">56.86</div>
<div class="c n" style="top:507px;right:1282.5px;color:#d2d200">100779</div>
<div class="c n" style="top:507px;right:1216px;color:#00e600">2</div>
<div class="c n" style="top:507px;right:1157.5px;color:#e6e6e6">0.00</div>
<div class="c n" style="top:507px;right:1091px;color:#e6e6e6">1.00</div>
<div class="c n" style="top:507px;right:1014px;color:#e6e6e6">9.00</div>
<div class="c n" style="top:507px;right:940px;color:#ff3232">9.00</div>
<div class="c n" style="top:507px;right:863px;color:#00e600">9.00</div>
<div class="c n" style="top:507px;right:787px;color:#e6e6e6">9.00</div>
<div class="c n" style="top:507px;right:701.5px;color:#e6e6e6">10.00</div>
<div class="c n" style="top:507px;right:626px;color:#00dcdc">5.94亿</div>
<div class="c n" style="top:507px;right:568px;color:#ff3232">2.38</div>
<div class="c ind" style="top:507px">软件服务</div>
<div class="c reg" style="top:507px">江苏</div>
<div class="c n" style="top:507px;right:336px;color:#e6e6e6">6.23</div>
<div class="c n" style="top:507px;right:260px;color:#ff3232">58.96</div>
<div class="c np" style="top:507px;color:#00e600"><span>33993</span></div>
<div class="c n" style="top:507px;right:152px;color:#ff3232">46786</div>
<div class="c n" style="top:507px;right:86px;color:#00e600">1.15</div>
<div class="c n" style="top:507px;right:18px;color:#d2d200">2</div>
<div class="c idx" style="top:530px">21</div>
<div class="c code" style="top:530px">300602</div>
<div class="c nm" style="top:530px">飞荣达</div>
<div class="c let" style="top:530px;color:#ff5a5a">R</div>
<div class="c n" style="top:530px;right:1644px;color:#00e600">-1.79</div>
<div class="hlcell" style="top:530px"></div>
<div class="c n" style="top:530px;right:1569px;color:#ffffff">17.04</div>
<div class="c n" style="top:530px;right:1502px;color:#00e600">-0.31</div>
<div class="c n" style="top:530px;right:1426px;color:#00e600">17.04</div>
<div class="c n" style="top:530px;right:1350px;color:#00e600">17.05</div>
<div class="c n" style="top:530px;right:1282.5px;color:#d2d200">32634</div>
<div class="c n" style="top:530px;right:1216px;color:#00e600">2</div>
<div class="c n" style="top:530px;right:1157.5px;color:#e6e6e6">0.00</div>
<div class="c n" style="top:530px;right:1091px;color:#e6e6e6">1.00</div>
<div class="c n" style="top:530px;right:1014px;color:#e6e6e6">9.00</div>
<div class="c n" style="top:530px;right:940px;color:#ff3232">9.00</div>
<div class="c n" style="top:530px;right:863px;color:#00e600">9.00</div>
<div class="c n" style="top:530px;right:787px;color:#e6e6e6">9.00</div>
<div class="c n" style="top:530px;right:701.5px;color:#e6e6e6">10.00</div>
<div class="c n" style="top:530px;right:626px;color:#00dcdc">5620万</div>
<div class="c n" style="top:530px;right:568px;color:#ff3232">1.55</div>
<div class="c ind" style="top:530px">元器件</div>
<div class="c reg" style="top:530px">深圳</div>
<div class="c n" style="top:530px;right:336px;color:#e6e6e6">3.69</div>
<div class="c n" style="top:530px;right:260px;color:#00e600">17.22</div>
<div class="c np" style="top:530px;color:#00e600"><span>77660</span></div>
<div class="c n" style="top:530px;right:152px;color:#ff3232">14974</div>
<div class="c n" style="top:530px;right:86px;color:#00e600">1.18</div>
<div class="c n" style="top:530px;right:18px;color:#d2d200">19</div>
<div class="c idx" style="top:553px">22</div>
<div class="c code" style="top:553px">300676</div>
<div class="c nm" style="top:553px">华大基因</div>
<div class="c let" style="top:553px;color:#ff5a5a">R</div>
<div class="c n" style="top:553px;right:1644px;color:#ff3232">18.69</div>
<div class="c n" style="top:553px;right:1569px;color:#ff3232">75.00</div>
<div class="c n" style="top:553px;right:1502px;color:#ff3232">11.81</div>
<div class="c n" style="top:553px;right:1426px;color:#ff3232">74.95</div>
<div class="c n" style="top:553px;right:1350px;color:#ff3232">75.00</div>
<div class="c n" style="top:553px;right:1282.5px;color:#d2d200">236795</div>
<div class="c n" style="top:553px;right:1216px;color:#00e600">2</div>
<div class="c n" style="top:553px;right:1157.5px;color:#e6e6e6">0.00</div>
<div class="c n" style="top:553px;right:1091px;color:#e6e6e6">1.00</div>
<div class="c n" style="top:553px;right:1014px;color:#e6e6e6">9.00</div>
<div class="c n" style="top:553px;right:940px;color:#ff3232">9.00</div>
<div class="c n" style="top:553px;right:863px;color:#00e600">9.00</div>
<div class="c n" style="top:553px;right:787px;color:#e6e6e6">9.00</div>
<div class="c n" style="top:553px;right:701.5px;color:#e6e6e6">10.00</div>
<div class="c n" style="top:553px;right:626px;color:#00dcdc">17.0亿</div>
<div class="c n" style="top:553px;right:568px;color:#e600e6">8.42</div>
<div class="c ind" style="top:553px">医疗保健</div>
<div class="c reg" style="top:553px">深圳</div>
<div class="c n" style="top:553px;right:336px;color:#e6e6e6">18.39</div>
<div class="c n" style="top:553px;right:260px;color:#ff3232">71.58</div>
<div class="c np" style="top:553px;color:#00e600"><span>77504</span></div>
<div class="c n" style="top:553px;right:152px;color:#ff3232">129291</div>
<div class="c n" style="top:553px;right:86px;color:#ff3232">0.83</div>
<div class="c n" style="top:553px;right:18px;color:#d2d200">47</div>
<div class="c idx" style="top:576px">23</div>
<div class="c code" style="top:576px">300729</div>
<div class="c nm" style="top:576px">乐歌股份</div>
<div class="c n" style="top:576px;right:1644px;color:#ff3232">0.72</div>
<div class="c n" style="top:576px;right:1569px;color:#ff3232">18.30</div>
<div class="c n" style="top:576px;right:1502px;color:#ff3232">0.13</div>
<div class="c n" style="top:576px;right:1426px;color:#ff3232">18.30</div>
<div class="c n" style="top:576px;right:1350px;color:#ff3232">18.31</div>
<div class="c n" style="top:576px;right:1282.5px;color:#d2d200">42054</div>
<div class="c n" style="top:576px;right:1216px;color:#00e600">2</div>
<div class="c n" style="top:576px;right:1157.5px;color:#e6e6e6">0.00</div>
<div class="c n" style="top:576px;right:1091px;color:#e6e6e6">1.00</div>
<div class="c n" style="top:576px;right:1014px;color:#e6e6e6">9.00</div>
<div class="c n" style="top:576px;right:940px;color:#ff3232">9.00</div>
<div class="c n" style="top:576px;right:863px;color:#00e600">9.00</div>
<div class="c n" style="top:576px;right:787px;color:#e6e6e6">9.00</div>
<div class="c n" style="top:576px;right:701.5px;color:#e6e6e6">10.00</div>
<div class="c n" style="top:576px;right:626px;color:#00dcdc">7723万</div>
<div class="c n" style="top:576px;right:568px;color:#ff3232">2.15</div>
<div class="c ind" style="top:576px">家居用品</div>
<div class="c reg" style="top:576px">浙江</div>
<div class="c n" style="top:576px;right:336px;color:#e6e6e6">3.36</div>
<div class="c n" style="top:576px;right:260px;color:#ff3232">18.37</div>
<div class="c np" style="top:576px;color:#00e600"><span>33884</span></div>
<div class="c n" style="top:576px;right:152px;color:#ff3232">23170</div>
<div class="c n" style="top:576px;right:86px;color:#ff3232">0.82</div>
<div class="c n" style="top:576px;right:18px;color:#d2d200">40</div>
<div class="c idx" style="top:599px">24</div>
<div class="c code" style="top:599px">300811</div>
<div class="c nm" style="top:599px">铂科新材</div>
<div class="c n" style="top:599px;right:1644px;color:#00e600">-0.75</div>
<div class="c n" style="top:599px;right:1569px;color:#00e600">96.99</div>
<div class="c n" style="top:599px;right:1502px;color:#00e600">-0.73</div>
<div class="c n" style="top:599px;right:1426px;color:#00e600">96.63</div>
<div class="c n" style="top:599px;right:1350px;color:#00e600">96.99</div>
<div class="c n" style="top:599px;right:1282.5px;color:#d2d200">9017</div>
<div class="c n" style="top:599px;right:1216px;color:#00e600">2</div>
<div class="c n" style="top:599px;right:1157.5px;color:#e6e6e6">0.00</div>
<div class="c n" style="top:599px;right:1091px;color:#e6e6e6">1.00</div>
<div class="c n" style="top:599px;right:1014px;color:#e6e6e6">9.00</div>
<div class="c n" style="top:599px;right:940px;color:#ff3232">9.00</div>
<div class="c n" style="top:599px;right:863px;color:#00e600">9.00</div>
<div class="c n" style="top:599px;right:787px;color:#e6e6e6">9.00</div>
<div class="c n" style="top:599px;right:701.5px;color:#e6e6e6">10.00</div>
<div class="c n" style="top:599px;right:626px;color:#00dcdc">8825万</div>
<div class="c n" style="top:599px;right:568px;color:#00e600">0.87</div>
<div class="c ind" style="top:599px">矿物制品</div>
<div class="c reg" style="top:599px">深圳</div>
<div class="c n" style="top:599px;right:336px;color:#e6e6e6">2.56</div>
<div class="c n" style="top:599px;right:260px;color:#ff3232">97.87</div>
<div class="c np" style="top:599px;color:#00e600"><span>33592</span></div>
<div class="c n" style="top:599px;right:152px;color:#ff3232">5425</div>
<div class="c n" style="top:599px;right:86px;color:#ff3232">0.66</div>
<div class="c n" style="top:599px;right:18px;color:#d2d200">12</div>
<div class="c idx" style="top:622px">25</div>
<div class="c code" style="top:622px">300877</div>
<div class="c nm" style="top:622px">金春股份</div>
<div class="c let" style="top:622px;color:#ff5a5a">Z</div>
<div class="c n" style="top:622px;right:1644px;color:#00e600">-1.45</div>
<div class="c n" style="top:622px;right:1569px;color:#00e600">17.03</div>
<div class="c n" style="top:622px;right:1502px;color:#00e600">-0.25</div>
<div class="c n" style="top:622px;right:1426px;color:#00e600">17.01</div>
<div class="c n" style="top:622px;right:1350px;color:#00e600">17.03</div>
<div class="c n" style="top:622px;right:1282.5px;color:#d2d200">5046</div>
<div class="c n" style="top:622px;right:1216px;color:#00e600">2</div>
<div class="c n" style="top:622px;right:1157.5px;color:#e6e6e6">0.00</div>
<div class="c n" style="top:622px;right:1091px;color:#e6e6e6">1.00</div>
<div class="c n" style="top:622px;right:1014px;color:#e6e6e6">9.00</div>
<div class="c n" style="top:622px;right:940px;color:#ff3232">9.00</div>
<div class="c n" style="top:622px;right:863px;color:#00e600">9.00</div>
<div class="c n" style="top:622px;right:787px;color:#e6e6e6">9.00</div>
<div class="c n" style="top:622px;right:701.5px;color:#e6e6e6">10.00</div>
<div class="c n" style="top:622px;right:626px;color:#00dcdc">865.4万</div>
<div class="c n" style="top:622px;right:568px;color:#00e600">0.91</div>
<div class="c ind" style="top:622px">纺织</div>
<div class="c reg" style="top:622px">安徽</div>
<div class="c n" style="top:622px;right:336px;color:#e6e6e6">2.14</div>
<div class="c n" style="top:622px;right:260px;color:#00e600">17.15</div>
<div class="c np" style="top:622px;color:#00e600"><span>33153</span></div>
<div class="c n" style="top:622px;right:152px;color:#ff3232">1893</div>
<div class="c n" style="top:622px;right:86px;color:#00e600">1.67</div>
<div class="c n" style="top:622px;right:18px;color:#d2d200">20</div>
<div class="c idx" style="top:645px">26</div>
<div class="c code" style="top:645px">301018</div>
<div class="c nm" style="top:645px">申菱环境</div>
<div class="c let" style="top:645px;color:#ff5a5a">Z</div>
<div class="c n" style="top:645px;right:1644px;color:#ff3232">3.14</div>
<div class="c n" style="top:645px;right:1569px;color:#ff3232">42.02</div>
<div class="c n" style="top:645px;right:1502px;color:#ff3232">1.28</div>
<div class="c n" style="top:645px;right:1426px;color:#ff3232">42.02</div>
<div class="c n" style="top:645px;right:1350px;color:#ff3232">42.03</div>
<div class="c n" style="top:645px;right:1282.5px;color:#d2d200">49447</div>
<div class="c n" style="top:645px;right:1216px;color:#00e600">2</div>
<div class="c n" style="top:645px;right:1157.5px;color:#e6e6e6">0.00</div>
<div class="c n" style="top:645px;right:1091px;color:#e6e6e6">1.00</div>
<div class="c n" style="top:645px;right:1014px;color:#e6e6e6">9.00</div>
<div class="c n" style="top:645px;right:940px;color:#ff3232">9.00</div>
<div class="c n" style="top:645px;right:863px;color:#00e600">9.00</div>
<div class="c n" style="top:645px;right:787px;color:#e6e6e6">9.00</div>
<div class="c n" style="top:645px;right:701.5px;color:#e6e6e6">10.00</div>
<div class="c n" style="top:645px;right:626px;color:#00dcdc">2.10亿</div>
<div class="c n" style="top:645px;right:568px;color:#ff3232">1.78</div>
<div class="c ind" style="top:645px">专用机械</div>
<div class="c reg" style="top:645px">广东</div>
<div class="c n" style="top:645px;right:336px;color:#e6e6e6">7.31</div>
<div class="c n" style="top:645px;right:260px;color:#ff3232">42.54</div>
<div class="c np" style="top:645px;color:#00e600"><span>33097</span></div>
<div class="c n" style="top:645px;right:152px;color:#ff3232">26350</div>
<div class="c n" style="top:645px;right:86px;color:#ff3232">0.88</div>
<div class="c n" style="top:645px;right:18px;color:#d2d200">1</div>
<div class="c idx" style="top:668px">27</div>
<div class="c code" style="top:668px">301060</div>
<div class="c nm" style="top:668px">兰卫医学</div>
<div class="c let" style="top:668px;color:#ff5a5a">Z</div>
<div class="c n" style="top:668px;right:1644px;color:#ff3232">4.32</div>
<div class="c n" style="top:668px;right:1569px;color:#ff3232">22.46</div>
<div class="c n" style="top:668px;right:1502px;color:#ff3232">0.93</div>
<div class="c n" style="top:668px;right:1426px;color:#ff3232">22.45</div>
<div class="c n" style="top:668px;right:1350px;color:#ff3232">22.46</div>
<div class="c n" style="top:668px;right:1282.5px;color:#d2d200">288543</div>
<div class="c n" style="top:668px;right:1216px;color:#00e600">2</div>
<div class="c n" style="top:668px;right:1157.5px;color:#e6e6e6">0.00</div>
<div class="c n" style="top:668px;right:1091px;color:#e6e6e6">1.00</div>
<div class="c n" style="top:668px;right:1014px;color:#e6e6e6">9.00</div>
<div class="c n" style="top:668px;right:940px;color:#ff3232">9.00</div>
<div class="c n" style="top:668px;right:863px;color:#00e600">9.00</div>
<div class="c n" style="top:668px;right:787px;color:#e6e6e6">9.00</div>
<div class="c n" style="top:668px;right:701.5px;color:#e6e6e6">10.00</div>
<div class="c n" style="top:668px;right:626px;color:#00dcdc">6.46亿</div>
<div class="c n" style="top:668px;right:568px;color:#e600e6">6.14</div>
<div class="c ind" style="top:668px">医疗保健</div>
<div class="c reg" style="top:668px">上海</div>
<div class="c n" style="top:668px;right:336px;color:#e6e6e6">9.71</div>
<div class="c n" style="top:668px;right:260px;color:#ff3232">22.38</div>
<div class="c np" style="top:668px;color:#00e600"><span>33979</span></div>
<div class="c n" style="top:668px;right:152px;color:#ff3232">144564</div>
<div class="c n" style="top:668px;right:86px;color:#00e600">1.00</div>
<div class="c n" style="top:668px;right:18px;color:#d2d200">306</div>
<div class="c idx" style="top:691px">28</div>
<div class="c code" style="top:691px">301302</div>
<div class="c nm" style="top:691px">华如科技</div>
<div class="c let" style="top:691px;color:#ff5a5a">Z</div>
<div class="c n" style="top:691px;right:1644px;color:#ff3232">1.78</div>
<div class="c n" style="top:691px;right:1569px;color:#ff3232">70.47</div>
<div class="c n" style="top:691px;right:1502px;color:#ff3232">1.23</div>
<div class="c n" style="top:691px;right:1426px;color:#ff3232">70.46</div>
<div class="c n" style="top:691px;right:1350px;color:#ff3232">70.47</div>
<div class="c n" style="top:691px;right:1282.5px;color:#d2d200">30498</div>
<div class="c n" style="top:691px;right:1216px;color:#00e600">2</div>
<div class="c n" style="top:691px;right:1157.5px;color:#e6e6e6">0.00</div>
<div class="c n" style="top:691px;right:1091px;color:#e6e6e6">1.00</div>
<div class="c n" style="top:691px;right:1014px;color:#e6e6e6">9.00</div>
<div class="c n" style="top:691px;right:940px;color:#ff3232">9.00</div>
<div class="c n" style="top:691px;right:863px;color:#00e600">9.00</div>
<div class="c n" style="top:691px;right:787px;color:#e6e6e6">9.00</div>
<div class="c n" style="top:691px;right:701.5px;color:#e6e6e6">10.00</div>
<div class="c n" style="top:691px;right:626px;color:#00dcdc">2.17亿</div>
<div class="c n" style="top:691px;right:568px;color:#ff3232">2.91</div>
<div class="c ind" style="top:691px">软件服务</div>
<div class="c reg" style="top:691px">北京</div>
<div class="c n" style="top:691px;right:336px;color:#e6e6e6">4.79</div>
<div class="c n" style="top:691px;right:260px;color:#ff3232">71.05</div>
<div class="c np" style="top:691px;color:#00e600"><span>55031</span></div>
<div class="c n" style="top:691px;right:152px;color:#ff3232">14467</div>
<div class="c n" style="top:691px;right:86px;color:#00e600">1.11</div>
<div class="c n" style="top:691px;right:18px;color:#d2d200">2</div>
<div style="left:928px;top:94px;width:55px;height:20px;border:1px solid #6a6a6a"></div>

<div id="btabbar"></div>
<div class="bt" style="left:0px;width:47px;color:#e8e8e8">分类<span class="tri"></span></div>
<div class="bt" style="left:48px;width:35px;color:#ff3030">自选</div>
<div class="bt" style="left:84px;width:47px;color:#e8e8e8">板块<span class="tri"></span></div>
<div class="bt" style="left:132px;width:47px;color:#e8e8e8">自定<span class="tri"></span></div>
<div class="bt" style="left:180px;width:47px;color:#9a9a9a">港股<span class="tri"></span></div>
<div class="bt" style="left:228px;width:47px;color:#9a9a9a">期权<span class="tri"></span></div>
<div class="bt" style="left:276px;width:71px;color:#9a9a9a">期货现货<span class="tri"></span></div>
<div class="bt" style="left:348px;width:71px;color:#9a9a9a">基金理财<span class="tri"></span></div>
<div class="bt" style="left:420px;width:71px;color:#9a9a9a">美股环球<span class="tri"></span></div>
<div class="bt" style="left:492px;width:71px;color:#9a9a9a">其它品种<span class="tri"></span></div>
<div style="left:565px;top:974px;width:13px;height:15px;border:1px solid #2c323a;background:#000"></div>
<svg style="position:absolute;left:568px;top:977px" width="8" height="10"><path d="M5.5 0.5 L1.5 4.5 L5.5 8.5 Z" fill="#585d64"/></svg>
<div style="left:579px;top:974px;width:38px;height:15px;background:#222830"></div>
<div style="left:1906px;top:974px;width:13px;height:15px;border:1px solid #2c323a"></div>
<svg style="position:absolute;left:1909px;top:977px" width="8" height="10"><path d="M2 0.5 L6 4.5 L2 8.5 Z" fill="#585d64"/></svg>
<div id="bar2"></div>
<div id="status"></div>
<div style="left:3px;top:1020px;width:15px;height:15px;border-radius:50%;background:linear-gradient(180deg,#b5bcc6,#7c8590)"></div>
<svg style="position:absolute;left:3px;top:1020px" width="15" height="15"><path d="M4.5 4.5 L7.5 7.5 L10.5 4.5 M4.5 7.5 L7.5 10.5 L10.5 7.5" stroke="#3a4048" stroke-width="1.2" fill="none"/></svg>
<div class="st" style="left:26px;color:#c8c8c8"><span style="position:static;font-size:12px">上证</span></div>
<div class="st" style="left:54.5px;color:#3cd23c">3230.04</div>
<div class="st" style="left:107.5px;color:#3cd23c">-35.61</div>
<div class="st" style="left:152.5px;color:#3cd23c">-1.09%</div>
<div class="st" style="left:196px;color:#c8c8c8">2985<span style="position:static;font-size:12px">亿</span></div>
<div class="st" style="left:245px;color:#c8c8c8"><span style="position:static;font-size:12px">深证</span></div>
<div class="st" style="left:273.3px;color:#3cd23c">11562.3</div>
<div class="st" style="left:326.7px;color:#3cd23c">-71.94</div>
<div class="st" style="left:371.7px;color:#3cd23c">-0.62%</div>
<div class="st" style="left:415px;color:#c8c8c8">4561<span style="position:static;font-size:12px">亿</span></div>
<div class="st" style="left:465px;color:#c8c8c8"><span style="position:static;font-size:12px">沪深</span></div>
<div class="st" style="left:493.3px;color:#3cd23c">3987.55</div>
<div class="st" style="left:546.7px;color:#3cd23c">-39.50</div>
<div class="st" style="left:591.7px;color:#3cd23c">-0.98%</div>
<div class="st" style="left:635px;color:#c8c8c8">2120<span style="position:static;font-size:12px">亿</span></div>
<div class="st" style="left:685px;color:#c8c8c8"><span style="position:static;font-size:12px">创业</span></div>
<div class="st" style="left:713.3px;color:#ff3c3c">2380.32</div>
<div class="st" style="left:774.3px;color:#ff3c3c">9.94</div>
<div class="st" style="left:811.7px;color:#ff3c3c">0.42%</div>
<div class="st" style="left:855px;color:#c8c8c8">2068<span style="position:static;font-size:12px">亿</span></div>
<div class="st" style="left:905px;color:#c8c8c8"><span style="position:static;font-size:12px">科创</span></div>
<div class="st" style="left:933.3px;color:#3cd23c">1044.93</div>
<div class="st" style="left:986.7px;color:#3cd23c">-16.06</div>
<div class="st" style="left:1031.7px;color:#3cd23c">-1.51%</div>
<div class="st" style="left:1075px;color:#c8c8c8">635.4<span style="position:static;font-size:12px">亿</span></div>
<div class="st" style="left:1276px;color:#c8c8c8"><span style="position:static;font-size:12px">北京联通主站</span>Z2</div>
<svg style="position:absolute;left:1120px;top:1012px" width="160" height="30">
<rect x="8.6" y="9.6" width="49" height="6.4" fill="#1a1d23" stroke="#ffffff" stroke-width="1.2"/>
<rect x="21" y="10.2" width="11.2" height="5.2" fill="#ff0000"/><rect x="32.2" y="10.2" width="12.6" height="5.2" fill="#008000"/>
<line x1="20.4" y1="9.6" x2="20.4" y2="16" stroke="#fff" stroke-width="1"/><line x1="45.4" y1="9.6" x2="45.4" y2="16" stroke="#fff" stroke-width="1"/>
<rect x="60.6" y="9.6" width="49" height="6.4" fill="#1a1d23" stroke="#ffffff" stroke-width="1.2"/>
<rect x="72.4" y="10.2" width="11.6" height="5.2" fill="#ff0000"/><rect x="84" y="10.2" width="13" height="5.2" fill="#008000"/>
<line x1="71.8" y1="9.6" x2="71.8" y2="16" stroke="#fff" stroke-width="1"/><line x1="97.5" y1="9.6" x2="97.5" y2="16" stroke="#fff" stroke-width="1"/>
<path d="M15 16.2 V20.5" stroke="#008a00" stroke-width="1.8"/><path d="M11.8 19 L15 22.6 L18.2 19 Z" fill="#008a00"/>
<rect x="19.9" y="17.2" width="6" height="1.8" fill="#008a00"/><rect x="19.9" y="20.4" width="6" height="1.8" fill="#008a00"/>
<path d="M30.8 16.2 V20.5" stroke="#008a00" stroke-width="1.8"/><path d="M27.6 19 L30.8 22.6 L34.0 19 Z" fill="#008a00"/>
<path d="M38.75 18.5 V22.6" stroke="#008a00" stroke-width="1.8"/><path d="M35.55 19.8 L38.75 16.2 L41.95 19.8 Z" fill="#008a00"/>
<rect x="43.7" y="17.2" width="6" height="1.8" fill="#008a00"/><rect x="43.7" y="20.4" width="6" height="1.8" fill="#008a00"/>
<rect x="52" y="17.2" width="6" height="1.8" fill="#008a00"/><rect x="52" y="20.4" width="6" height="1.8" fill="#008a00"/>
<path d="M67 16.2 V20.5" stroke="#008a00" stroke-width="1.8"/><path d="M63.8 19 L67 22.6 L70.2 19 Z" fill="#008a00"/>
<rect x="72" y="17.2" width="6" height="1.8" fill="#008a00"/><rect x="72" y="20.4" width="6" height="1.8" fill="#008a00"/>
<path d="M83 18.5 V22.6" stroke="#008a00" stroke-width="1.8"/><path d="M79.8 19.8 L83 16.2 L86.2 19.8 Z" fill="#008a00"/>
<path d="M91 18.5 V22.6" stroke="#008a00" stroke-width="1.8"/><path d="M87.8 19.8 L91 16.2 L94.2 19.8 Z" fill="#008a00"/>
<rect x="96" y="17.2" width="6" height="1.8" fill="#008a00"/><rect x="96" y="20.4" width="6" height="1.8" fill="#008a00"/>
<rect x="104" y="17.2" width="6" height="1.8" fill="#008a00"/><rect x="104" y="20.4" width="6" height="1.8" fill="#008a00"/>
</svg>
<svg style="position:absolute;left:1238px;top:1020px" width="40" height="14">
<rect x="1" y="0.5" width="15" height="12" rx="2" fill="url(#ig2)"/>
<defs><linearGradient id="ig2" x1="0" y1="0" x2="0" y2="1"><stop offset="0" stop-color="#9da2a9"/><stop offset="1" stop-color="#6e747c"/></linearGradient></defs>
<path d="M5.6 3.5 Q3.8 6.5 5.6 9.5 M11.4 3.5 Q13.2 6.5 11.4 9.5" stroke="#2a2e36" stroke-width="1" fill="none"/><circle cx="8.5" cy="6.5" r="1" fill="#2a2e36"/>
<rect x="21" y="0.5" width="15" height="12" rx="2" fill="url(#ig2)"/>
<path d="M26.6 3.4 L28.6 2.2 V10.5" stroke="#eef2f6" stroke-width="1.4" fill="none"/>
</svg>
<div class="st" style="left:1754px;top:1016px;color:#c8c8c8">7x24</div>
<svg style="position:absolute;left:1790px;top:1012px" width="130" height="30">
<defs><linearGradient id="ig" x1="0" y1="0" x2="0" y2="1"><stop offset="0" stop-color="#aab0b8"/><stop offset="1" stop-color="#7a818a"/></linearGradient></defs>
<rect x="8" y="8" width="15" height="12" rx="2" fill="url(#ig)"/>
<g fill="#2a2e36"><rect x="10" y="10.6" width="1.1" height="1.1"/><rect x="12" y="10.6" width="1.1" height="1.1"/><rect x="14" y="10.6" width="1.1" height="1.1"/><rect x="16" y="10.6" width="1.1" height="1.1"/><rect x="18" y="10.6" width="1.1" height="1.1"/><rect x="20" y="10.6" width="1.1" height="1.1"/>
<rect x="10" y="13" width="1.1" height="1.1"/><rect x="12" y="13" width="1.1" height="1.1"/><rect x="14" y="13" width="1.1" height="1.1"/><rect x="16" y="13" width="1.1" height="1.1"/><rect x="18" y="13" width="1.1" height="1.1"/><rect x="20" y="13" width="1.1" height="1.1"/>
<rect x="11" y="16.2" width="9" height="1.1"/></g>
<rect x="38" y="8" width="15.2" height="10" rx="2" fill="url(#ig)"/>
<path d="M40 13.5 H43 L44.5 11 L46.5 15.5 L48 13 H51" stroke="#2a2e36" stroke-width="1.1" fill="none"/>
<rect x="44.6" y="18" width="1.6" height="1.6" fill="#80878f"/><rect x="41.8" y="19.4" width="7" height="1.2" fill="#80878f"/>
<path d="M69.5 7 C67 10 67.5 15 71 18 C74.5 21 79.5 21 82.2 18.5 Z" fill="url(#ig)"/>
<path d="M75.5 13 L79 9.6" stroke="#9aa0a8" stroke-width="1"/><circle cx="79" cy="9.6" r="1.1" fill="#9aa0a8"/>
<path d="M71 18.5 L68.3 21.5 H73.5 Z" fill="#80878f"/>
<circle cx="105.5" cy="14.4" r="7.6" fill="url(#ig)"/>
<path d="M106.8 10.2 L103.2 15 H106.2 L104.4 18.8" stroke="#22262d" stroke-width="1.3" fill="none" stroke-linejoin="miter"/>
</svg>
<div style="left:0;top:1040px;width:1920px;height:2px;background:#28352a"></div><div style="left:169px;top:1040px;width:44px;height:2px;background:#5f6e60"></div>

<!-- dialog -->
<div id="dlg">
 <div id="dtitle"></div>
 <div style="left:5px;top:4px;color:#fff;font-size:12px;line-height:14px">条件选股</div>
 <div style="left:511px;top:9px;width:10px;height:1px;background:#f0c8c8"></div>
 <svg style="position:absolute;left:530px;top:4px" width="11" height="11"><path d="M0.5 0.5 L10.5 10.5 M10.5 0.5 L0.5 10.5" stroke="#f4dede" stroke-width="1"/></svg>
 <div style="left:6px;top:36px">条件选股公式</div>
 <div class="edit" style="left:85px;top:30px;width:284px;height:25px;border-color:#7a7a7a"></div>
 <div style="left:89px;top:36px">起点选股</div><div style="left:157px;top:36px">-</div>
 <div style="left:350px;top:31px;width:1px;height:23px;background:#bcbcbc"></div>
 <svg style="position:absolute;left:355px;top:39px" width="9" height="6"><path d="M0 0 H9 L4.5 5 Z" fill="#7a7a7a"/></svg>
 <div class="btn" style="left:373px;top:30px;width:42px"><span>查找</span></div>
 <div class="btn" style="left:420px;top:30px;width:57px"><span>用法注释</span></div>
 <div class="btn" style="left:481px;top:30px;width:57px"><span>查看公式</span></div>

 <div class="grp" style="left:4px;top:67px;width:210px;height:201px"></div>
 <div class="glab" style="left:11px;top:61px">计算参数</div>
 <div style="left:11px;top:95px">无参数需要设置</div>
 <div style="left:191px;top:87px;width:1px;height:125px;background:#fdfdfd"></div>
 <div style="left:192px;top:104px;width:15px;height:58px;background:#cdcdcd"></div>
 <svg style="position:absolute;left:195px;top:92px" width="9" height="6"><path d="M1 5 L4.5 1.5 L8 5" stroke="#606060" stroke-width="1.6" fill="none"/></svg>
 <svg style="position:absolute;left:195px;top:199px" width="9" height="6"><path d="M1 1 L4.5 4.5 L8 1" stroke="#606060" stroke-width="1.6" fill="none"/></svg>
 <div style="left:13px;top:244px">选股周期:</div>
 <div class="edit" style="left:73px;top:238px;width:128px;height:24px;border-color:#9c9c9c"></div>
 <div style="left:78px;top:244px">日线</div>
 <div style="left:182px;top:239px;width:1px;height:22px;background:#c8c8c8"></div>
 <svg style="position:absolute;left:187px;top:247px" width="9" height="6"><path d="M0 0 H9 L4.5 5 Z" fill="#8a8a8a"/></svg>

 <div class="grp" style="left:4px;top:280px;width:210px;height:144px"></div>
 <div class="glab" style="left:11px;top:275px">选股范围</div>
 <div style="left:10px;top:295px">上证<span style="position:static;padding:0 2px 0 1.5px;font-size:13px">A</span>股 深证<span style="position:static;padding:0 2px 0 1.5px;font-size:13px">A</span>股</div>
 <div class="btn" style="left:139px;top:289px;width:63px"><span>改变范围</span></div>

 <div class="btn" style="left:223px;top:73px;width:66px"><span>加入条件</span></div>
 <div class="btn" style="left:223px;top:111px;width:66px"><span>删除条件</span></div>
 <div class="btn" style="left:223px;top:184px;width:66px"><span>引入方案</span></div>
 <div class="btn" style="left:223px;top:222px;width:66px"><span>保存方案</span></div>

 <div style="left:303px;top:59px">选股条件列表</div>
 <div class="edit" style="left:301px;top:75px;width:236px;height:174px;border-color:#8a8a8a"></div>
 <div style="left:303px;top:77px;width:232px;height:19px;background:#0078d7"></div>
 <div style="left:305px;top:80px;color:#fff">起点选股&nbsp;&nbsp;日线</div>

 <div style="left:302px;top:256px;width:12px;height:12px;border-radius:50%;border:1px solid #b8b8b8;background:#f4f4f4"></div>
 <div style="left:306px;top:260px;width:4px;height:4px;border-radius:50%;background:#a0a0a0"></div>
 <div style="left:320px;top:257px;color:#a6a6a6">全部条件相与</div>
 <div style="left:445px;top:256px;width:12px;height:12px;border-radius:50%;border:1px solid #b8b8b8;background:#f4f4f4"></div>
 <div style="left:463px;top:257px;color:#a6a6a6">全部条件相或</div>
 <div style="left:475px;top:277px;color:#f00000">选股完毕.</div>

 <div class="chk" style="left:223px;top:298px"></div>
 <div style="left:241px;top:298px">使用涨跌不定周期</div>
 <div style="left:343px;top:298px;width:194px;height:14px;border:1px solid #d4d4d4;background:#f0f0f0"></div>
 <div style="left:342px;top:321px">品种数</div>
 <div style="left:381px;top:321px;width:41px;height:14px;border:1px solid #d4d4d4"></div>
 <div style="left:382px;top:321px;font-size:12.5px">4962</div>
 <div style="left:427px;top:321px">选中数</div>
 <div style="left:466px;top:321px;width:70px;height:14px;border:1px solid #d4d4d4"></div>
 <div style="left:467px;top:321px;font-size:12.5px">28/0.6%</div>

 <div class="chk" style="left:223px;top:349px"></div>
 <svg style="position:absolute;left:225px;top:351px" width="10" height="9"><path d="M1 4.5 L3.8 7.5 L9 1.5" stroke="#1aa01a" stroke-width="1.8" fill="none"/></svg>
 <div style="left:241px;top:349px">前复权数据</div>
 <div class="chk" style="left:310px;top:349px"></div>
 <svg style="position:absolute;left:312px;top:351px" width="10" height="9"><path d="M1 4.5 L3.8 7.5 L9 1.5" stroke="#1aa01a" stroke-width="1.8" fill="none"/></svg>
 <div style="left:328px;top:349px">剔除当前未交易的品种</div>
 <div class="chk" style="left:457px;top:349px"></div>
 <svg style="position:absolute;left:459px;top:351px" width="10" height="9"><path d="M1 4.5 L3.8 7.5 L9 1.5" stroke="#1aa01a" stroke-width="1.8" fill="none"/></svg>
 <div style="left:475px;top:349px">剔除ST品种</div>

 <div class="chk" style="left:223px;top:378px"></div>
 <div style="left:241px;top:377px">时间段内满足条件</div>
 <div class="btn" style="left:385px;top:372px;width:72px"><span>选股入板块</span></div>
 <div class="btn" style="left:471px;top:372px;width:66px"><span>执行选股</span></div>
 <div class="btn" style="left:471px;top:399px;width:66px"><span>关闭</span></div>
</div>
<div class="wm" style="left:-49.5px;top:142.5px">www.cfchi.com</div>
<div class="wm" style="left:235.5px;top:142.5px">www.cfchi.com</div>
<div class="wm" style="left:520.5px;top:142.5px">www.cfchi.com</div>
<div class="wm" style="left:805.5px;top:142.5px">www.cfchi.com</div>
<div class="wm" style="left:1090.5px;top:142.5px">www.cfchi.com</div>
<div class="wm" style="left:1375.5px;top:142.5px">www.cfchi.com</div>
<div class="wm" style="left:1660.5px;top:142.5px">www.cfchi.com</div>
<div class="wm" style="left:-49.5px;top:362.5px">www.cfchi.com</div>
<div class="wm" style="left:235.5px;top:362.5px">www.cfchi.com</div>
<div class="wm" style="left:520.5px;top:362.5px">www.cfchi.com</div>
<div class="wm" style="left:805.5px;top:362.5px">www.cfchi.com</div>
<div class="wm" style="left:1090.5px;top:362.5px">www.cfchi.com</div>
<div class="wm" style="left:1375.5px;top:362.5px">www.cfchi.com</div>
<div class="wm" style="left:1660.5px;top:362.5px">www.cfchi.com</div>
<div class="wm" style="left:-49.5px;top:582.5px">www.cfchi.com</div>
<div class="wm" style="left:235.5px;top:582.5px">www.cfchi.com</div>
<div class="wm" style="left:520.5px;top:582.5px">www.cfchi.com</div>
<div class="wm" style="left:805.5px;top:582.5px">www.cfchi.com</div>
<div class="wm" style="left:1090.5px;top:582.5px">www.cfchi.com</div>
<div class="wm" style="left:1375.5px;top:582.5px">www.cfchi.com</div>
<div class="wm" style="left:1660.5px;top:582.5px">www.cfchi.com</div>
<div class="wm" style="left:-49.5px;top:802.5px">www.cfchi.com</div>
<div class="wm" style="left:235.5px;top:802.5px">www.cfchi.com</div>
<div class="wm" style="left:520.5px;top:802.5px">www.cfchi.com</div>
<div class="wm" style="left:805.5px;top:802.5px">www.cfchi.com</div>
<div class="wm" style="left:1090.5px;top:802.5px">www.cfchi.com</div>
<div class="wm" style="left:1375.5px;top:802.5px">www.cfchi.com</div>
<div class="wm" style="left:1660.5px;top:802.5px">www.cfchi.com</div>
</body></html>
